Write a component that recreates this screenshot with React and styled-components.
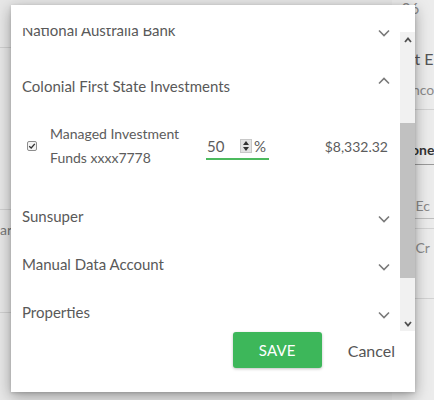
import React, { useLayoutEffect, useRef } from 'react'
import styled, { createGlobalStyle } from 'styled-components'

const GlobalStyle = createGlobalStyle`
  html, body {
    margin: 0;
    padding: 0;
    background: #e7e7e7;
    font-family: Lato, "Open Sans", Arial, sans-serif;
  }
`

const Page = styled.div`
  position: relative;
  width: 434px;
  height: 400px;
  overflow: hidden;
  background: #e7e7e7;
`

// the page sitting behind the dimmed overlay
const Backdrop = styled.div`
  display: flex;
  height: 100%;
`

const BackMain = styled.div`
  flex: 1;
  display: flex;
  flex-direction: column;
`

const BackLine = styled.div`
  height: ${props => props.h}px;
  border-bottom: 1px solid #cfcfcf;
  box-sizing: border-box;
  padding-top: 11px;
  font-size: 14px;
  color: #777;
  overflow: hidden;
  white-space: nowrap;
`

const BackSide = styled.div`
  width: 40px;
  display: flex;
  flex-direction: column;
  padding-left: 2px;
  background: #ececec;
  overflow: hidden;
  white-space: nowrap;
`

const SideCell = styled.div`
  height: ${props => props.h}px;
  box-sizing: border-box;
  display: flex;
  align-items: ${props => props.pos || 'center'};
  padding: ${props => props.pad || '0'};
  font-size: ${props => props.size || 14}px;
  font-weight: ${props => (props.bold ? 700 : 400)};
  color: ${props => props.color || '#8a8a8a'};
  border-bottom: ${props => (props.line ? `1px solid ${props.line}` : 'none')};
`

const Modal = styled.div`
  position: absolute;
  left: 11px;
  top: 5px;
  width: 404px;
  height: 387px;
  background: #fff;
  box-shadow: 0 4px 14px rgba(0, 0, 0, 0.35), 0 1px 3px rgba(0, 0, 0, 0.15);
  display: flex;
  flex-direction: column;
  padding-top: 23px;
  box-sizing: border-box;
`

const Body = styled.div`
  display: flex;
  height: 303px;
`

const ScrollArea = styled.div`
  flex: 1;
  overflow: hidden;
`

const Scrollbar = styled.div`
  width: 15px;
  margin-top: 4px;
  background: #f1f1f1;
  display: flex;
  flex-direction: column;
`

const ScrollArrow = styled.div`
  height: 15px;
  display: flex;
  align-items: center;
  justify-content: center;
  color: #505050;
`

const ScrollTrack = styled.div`
  flex: 1;
  display: flex;
  flex-direction: column;
`

const Thumb = styled.div`
  margin-top: ${props => props.top}px;
  height: ${props => props.size}px;
  background: #c1c1c1;
`

const PanelHeader = styled.div`
  height: 48px;
  margin-top: ${props => (props.expanded ? 8 : 0)}px;
  display: flex;
  align-items: center;
  justify-content: space-between;
  padding: 0 10px 0 11px;
`

const PanelTitle = styled.div`
  font-size: 15px;
  color: #595959;
`

const ChevronWrap = styled.div`
  display: flex;
  margin-top: ${props => (props.up ? -10 : 6)}px;
  color: #7a7a7a;
`

const Details = styled.div`
  padding: 12px 12px 22px 16px;
`

const ItemRow = styled.div`
  height: 48px;
  display: flex;
  align-items: center;
`

const Check = styled.div`
  width: 10px;
  height: 10px;
  border: 1px solid #8d8d8d;
  border-radius: 2px;
  background: #f4f4f4;
  box-sizing: border-box;
  display: flex;
  align-items: center;
  justify-content: center;
  margin-right: 13px;
`

const ItemName = styled.div`
  width: 156px;
  font-size: 14px;
  line-height: 24px;
  color: #5c5c5c;
`

const PercentField = styled.div`
  width: 63px;
  height: 27px;
  box-sizing: border-box;
  display: flex;
  align-items: center;
  border-bottom: 2px solid #4cba5e;
  margin-top: 1px;
`

const PercentInput = styled.div`
  width: 33px;
  padding-left: 1px;
  font-size: 15px;
  color: #5c5c5c;
`

const Stepper = styled.div`
  width: 12px;
  height: 14px;
  background: #e3e3e3;
  border: 1px solid #c8c8c8;
  box-sizing: border-box;
  display: flex;
  flex-direction: column;
  align-items: center;
  justify-content: space-around;
  margin-right: 2px;
`

const Percent = styled.span`
  font-size: 15px;
  color: #5c5c5c;
`

const Amount = styled.div`
  margin-left: auto;
  font-size: 14px;
  color: #5c5c5c;
`

const Footer = styled.div`
  flex: 1;
  display: flex;
  justify-content: flex-end;
  align-items: flex-start;
  padding: 1px 20px 0 0;
  gap: 26px;
`

const SaveButton = styled.button`
  width: 89px;
  height: 36px;
  border: none;
  border-radius: 3px;
  background: #3db75a;
  color: #fff;
  font-family: inherit;
  font-size: 15px;
  letter-spacing: 0.2px;
  box-shadow: 0 1px 3px rgba(0, 0, 0, 0.25);
  cursor: pointer;
`

const CancelButton = styled.button`
  height: 36px;
  border: none;
  background: none;
  padding: 0;
  font-family: inherit;
  font-size: 16px;
  color: #555;
  cursor: pointer;
`

const Chevron = ({ up }) => (
  <svg width='12' height='8' viewBox='0 0 12 8'>
    <path
      d={up ? 'M1 6.5 L6 1.5 L11 6.5' : 'M1 1.5 L6 6.5 L11 1.5'}
      fill='none'
      stroke='currentColor'
      strokeWidth='1.6'
    />
  </svg>
)

const ArrowGlyph = ({ up }) => (
  <svg width='8' height='6' viewBox='0 0 8 6'>
    <path
      d={up ? 'M1 5 L4 1.5 L7 5' : 'M1 1 L4 4.5 L7 1'}
      fill='none'
      stroke='currentColor'
      strokeWidth='1.8'
    />
  </svg>
)

const Panel = ({ title }) => (
  <PanelHeader>
    <PanelTitle>{title}</PanelTitle>
    <ChevronWrap>
      <Chevron />
    </ChevronWrap>
  </PanelHeader>
)

const banksBelow = ['Sunsuper', 'Manual Data Account', 'Properties']

export default function App () {
  const scrollRef = useRef(null)

  useLayoutEffect(() => {
    if (scrollRef.current) scrollRef.current.scrollTop = 22
  }, [])

  return (
    <Page>
      <GlobalStyle />
      <Backdrop>
        <BackMain>
          <BackLine h={48} />
          <BackLine h={162} />
          <BackLine h={103}>ary</BackLine>
        </BackMain>
        <BackSide>
          <SideCell h={16} color='#8a8a8a' size={15}>&nbsp;&nbsp;06</SideCell>
          <SideCell h={30} />
          <SideCell h={24} color='#555' size={16}>&nbsp;&nbsp;&nbsp;&nbsp;&nbsp;t E</SideCell>
          <SideCell h={40} line='#d2d2d2'>&nbsp;&nbsp;&nbsp;&nbsp;&nbsp;nco</SideCell>
          <SideCell h={55} color='#333' bold line='#9a9a9a' pos='flex-end' pad='0 0 6px'>&nbsp;&nbsp;&nbsp;&nbsp;&nbsp;one</SideCell>
          <SideCell h={54} line='#bdbdbd' pos='flex-end' pad='0 0 4px'>&nbsp;&nbsp;&nbsp;&nbsp;&nbsp;&nbsp;Ec</SideCell>
          <SideCell h={10} line='#d2d2d2' />
          <SideCell h={70} line='#d2d2d2' pos='flex-start' pad='10px 0 0'>&nbsp;&nbsp;&nbsp;&nbsp;&nbsp;&nbsp;Cr</SideCell>
        </BackSide>
      </Backdrop>

      <Modal>
        <Body>
          <ScrollArea ref={scrollRef}>
            <Panel title='National Australia Bank' />
            <PanelHeader expanded>
              <PanelTitle>Colonial First State Investments</PanelTitle>
              <ChevronWrap up>
                <Chevron up />
              </ChevronWrap>
            </PanelHeader>
            <Details>
              <ItemRow>
                <Check>
                  <svg width='8' height='8' viewBox='0 0 8 8'>
                    <path d='M1.2 4.2 L3.2 6 L6.8 1.8' fill='none' stroke='#333' strokeWidth='1.3' />
                  </svg>
                </Check>
                <ItemName>
                  Managed Investment
                  <br />
                  Funds xxxx7778
                </ItemName>
                <PercentField>
                  <PercentInput>50</PercentInput>
                  <Stepper>
                    <svg width='6' height='4' viewBox='0 0 6 4'>
                      <path d='M0 4 L3 0 L6 4 Z' fill='#333' />
                    </svg>
                    <svg width='6' height='4' viewBox='0 0 6 4'>
                      <path d='M0 0 L3 4 L6 0 Z' fill='#333' />
                    </svg>
                  </Stepper>
                  <Percent>%</Percent>
                </PercentField>
                <Amount>$8,332.32</Amount>
              </ItemRow>
            </Details>
            {banksBelow.map(name => <Panel key={name} title={name} />)}
          </ScrollArea>
          <Scrollbar>
            <ScrollArrow>
              <ArrowGlyph up />
            </ScrollArrow>
            <ScrollTrack>
              <Thumb top={76} size={155} />
            </ScrollTrack>
            <ScrollArrow>
              <ArrowGlyph />
            </ScrollArrow>
          </Scrollbar>
        </Body>
        <Footer>
          <SaveButton>SAVE</SaveButton>
          <CancelButton>Cancel</CancelButton>
        </Footer>
      </Modal>
    </Page>
  )
}
